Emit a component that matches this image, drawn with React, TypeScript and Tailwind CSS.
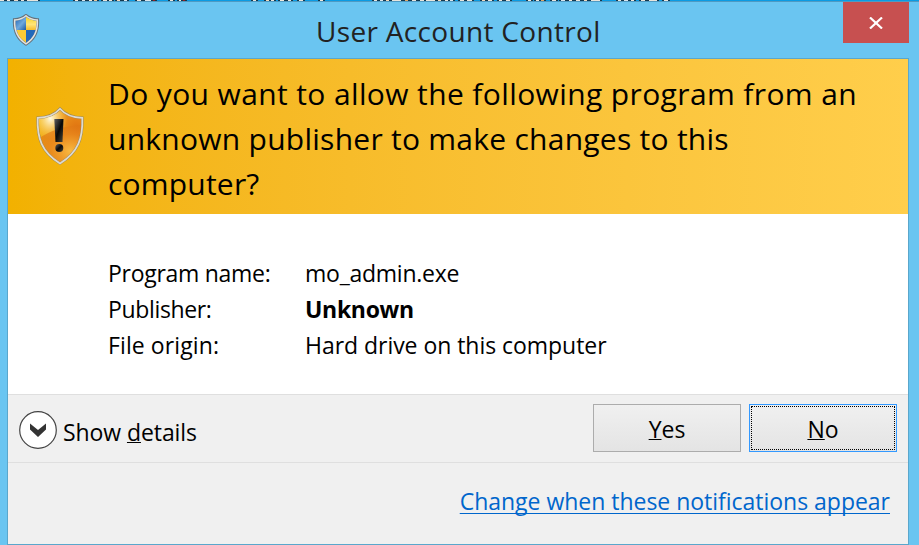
import React from "react";

const font = "font-['Open_Sans','Noto_Sans',sans-serif]";

// Pieces of the desktop label row peeking out above the window: left, width, colour
const slivers: [number, number, string][] = [
  [0, 4, "#e8e4dc"], [7, 3, "#f1ece4"], [14, 4, "#e8d8c8"], [21, 3, "#e8e4dc"], [27, 11, "#e8e4dc"],
  [75, 3, "#f0e8dc"], [82, 3, "#d8e4ec"], [89, 3, "#f0e8dc"], [94, 3, "#e8c89c"], [103, 4, "#e8e4dc"], [109, 3, "#e8e4dc"],
  [117, 3, "#f0d8bc"], [124, 3, "#d8e4ec"], [137, 4, "#e8e4dc"], [145, 7, "#d8e4ec"], [153, 2, "#932020"], [170, 3, "#e8e4dc"], [179, 4, "#f0e8dc"], [183, 2, "#932020"],
  [253, 3, "#e8e4dc"], [266, 3, "#f0d8bc"], [271, 3, "#e8e4dc"], [280, 4, "#f0e8dc"], [288, 3, "#e8e4dc"], [299, 4, "#e8e4dc"], [320, 3, "#f0e8dc"],
  [374, 3, "#e8e4dc"], [380, 3, "#d8e4ec"], [386, 3, "#f0d8bc"], [392, 9, "#e8e4dc"], [405, 3, "#e0a868"], [412, 4, "#e8e4dc"], [420, 4, "#e8e4dc"], [426, 9, "#e8e4dc"],
  [438, 3, "#f0d8bc"], [445, 3, "#e8e4dc"], [450, 3, "#d8e4ec"], [460, 4, "#e8e4dc"], [467, 5, "#e8e4dc"], [482, 3, "#f0d8bc"], [488, 4, "#e8e4dc"],
  [499, 3, "#e8e4dc"], [506, 4, "#e8e4dc"], [528, 3, "#f0e8dc"], [536, 3, "#e8e4dc"], [541, 3, "#e0a868"], [552, 4, "#e8e4dc"], [561, 4, "#d8e4ec"],
  [569, 3, "#f0e8dc"], [576, 4, "#e8e4dc"], [584, 3, "#f0d8bc"], [591, 9, "#e8e4dc"], [618, 3, "#e8e4dc"], [624, 4, "#d8e4ec"], [631, 3, "#f0e8dc"], [641, 4, "#e8e4dc"], [649, 8, "#e8e4dc"], [664, 4, "#e8e4dc"],
];

function UacShield() {
  return (
    <svg className="h-8 w-7" viewBox="0 0 28 32">
      <defs>
        <clipPath id="uac"><path d="M14 1.500C11 4 7 5.500 2 5.500c-.6 10 3 19 12 24.500 9-5.500 12.600-14.500 12-24.500-5 0-9-1.500-12-4z" /></clipPath>
        <linearGradient id="ub" x1="0" y1="0" x2="1" y2="1"><stop offset=".2" stopColor="#1c5fb0" /><stop offset=".65" stopColor="#6ea9de" /><stop offset="1" stopColor="#1c5aa5" /></linearGradient>
        <linearGradient id="uy" x1="0" y1="0" x2="0" y2="1"><stop offset=".2" stopColor="#f5d326" /><stop offset=".65" stopColor="#ffe578" /><stop offset="1" stopColor="#f5bd2c" /></linearGradient>
      </defs>
      <g clipPath="url(#uac)">
        <path fill="url(#ub)" d="M0 0h14v16H0z" />
        <path fill="url(#uy)" d="M14 0h14v16H14z" />
        <path fill="#fbcb35" d="M0 16h14v16H0z" />
        <path fill="#2268b9" d="M14 16h14v16H14z" />
      </g>
      <path fill="none" stroke="#65727c" strokeWidth="2.600" d="M14 1.300C11 4 7.500 5.300 2.200 5.500c-.6 10 2.300 19.200 11.800 24.800 9.500-5.600 12.400-14.800 11.800-24.800-5.300-.2-8.800-1.500-11.800-4.200z" />
      <path fill="none" stroke="#e3e3df" strokeWidth="1.500" d="M14 1.800C11 4.500 7.500 5.800 2.700 6c-.6 9.500 2.300 18.200 11.300 23.800 9-5.600 11.900-14.300 11.300-23.800-4.800-.2-8.300-1.500-11.300-4.200z" />
    </svg>
  );
}

function WarningShield() {
  return (
    <svg className="h-[58px] w-12" viewBox="0 0 48 58">
      <defs>
        <radialGradient id="wo" cx=".85" cy=".4" r=".8"><stop stopColor="#df7010" /><stop offset=".5" stopColor="#ec961c" /><stop offset="1" stopColor="#f3b51e" /></radialGradient>
        <radialGradient id="wh" cx=".3" cy=".2" r=".35"><stop stopColor="#fffbe6" /><stop offset="1" stopColor="#ffe268" stopOpacity="0" /></radialGradient>
        <radialGradient id="wl" cx=".7" cy=".65" r=".7"><stop stopColor="#f8b941" /><stop offset=".6" stopColor="#e8861c" stopOpacity=".85" /><stop offset="1" stopColor="#dd7412" stopOpacity=".6" /></radialGradient>
        <linearGradient id="wb" x1="0" y1="0" x2="1" y2="1"><stop stopColor="#606060" /><stop offset=".5" stopColor="#080808" /><stop offset="1" stopColor="#4b4639" /></linearGradient>
        <clipPath id="wc"><path d="M24 2C18 9 11 10.500 2 11c-.6 21 4 34 22 45 18-11 22.600-24 22-45-9-.5-16-2-22-9z" /></clipPath>
      </defs>
      <g clipPath="url(#wc)">
        <path fill="url(#wo)" d="M0 0h48v58H0z" />
        <path fill="url(#wh)" d="M0 0h48v58H0z" />
        <path fill="url(#wl)" d="M2 32Q20 19 48 18v40H2z" />
      </g>
      <path fill="none" stroke="#9b8659" strokeWidth="2.600" d="M24 1.700C18 8.700 11 10.500 1.700 10.800 1 31 5.500 45 24 56.500 42.500 45 47 31 46.300 10.800 37 10.500 30 8.700 24 1.700z" />
      <path fill="none" stroke="#dedacf" strokeWidth="1.700" d="M24 1.700C18 8.700 11 10.500 1.700 10.800 1 31 5.500 45 24 56.500 42.500 45 47 31 46.300 10.800 37 10.500 30 8.700 24 1.700z" />
      <path fill="url(#wb)" d="M18.300 12h9.200l-1 23h-7z" />
      <circle cx="23.300" cy="41" r="4" fill="url(#wb)" />
    </svg>
  );
}

export default function App() {
  return (
    <div className={`relative flex h-[545px] w-[919px] flex-col overflow-hidden bg-[#6ac5f1] text-black ${font}`}>
      <div className="relative h-px shrink-0 bg-[#0a9be4]">
        {slivers.map(([x, w, c]) => (
          <i key={x} className="absolute top-0 box-content h-px border-x-2 border-[#12384f]" style={{ left: x - 2, width: w, backgroundColor: c }} />
        ))}
      </div>
      <header className="flex h-[57px] shrink-0 items-start border-t border-[#4f9ac2] pl-3">
        <div className="mt-3"><UacShield /></div>
        <h1 className="ml-[276px] mt-2 w-[440px] whitespace-nowrap text-[28px] leading-[42px] tracking-[0.32px] text-[#222]">User Account Control</h1>
        <button className="ml-[87px] flex h-[41px] w-[66px] shrink-0 items-center justify-center bg-[#c75050]">
          <svg className="h-3 w-3.5" viewBox="0 0 14 12"><path d="M1 .5l12 11M13 .5l-12 11" stroke="white" strokeWidth="2.200" /></svg>
        </button>
      </header>
      <main className="ml-[7px] flex h-[487px] w-[902px] shrink-0 flex-col border border-[#5aa7cc] bg-[#f0f0f0]">
        <section className="flex h-[155px] shrink-0 bg-gradient-to-r from-[#f2b100] to-[#ffce4b] pl-7">
          <div className="mt-12"><WarningShield /></div>
          <h2 className="ml-6 mt-3 whitespace-nowrap text-[30px] leading-[45px]">
            <span className="block tracking-[0.38px]">Do you want to allow the following program from an</span>
            <span className="block tracking-[0.26px]">unknown publisher to make changes to this</span>
            <span className="block tracking-[0.2px]">computer?</span>
          </h2>
        </section>
        <section className="grid h-[180px] shrink-0 grid-cols-[197px_1fr] content-start bg-white pl-[100px] pt-[41px] text-[23px] leading-9">
          <span className="tracking-[-0.28px]">Program name:</span><span className="tracking-[-0.25px]">mo_admin.exe</span>
          <span className="tracking-[-0.35px]">Publisher:</span><b className="tracking-[-0.3px]">Unknown</b>
          <span className="tracking-[0.1px]">File origin:</span><span className="tracking-[-0.04px]">Hard drive on this computer</span>
        </section>
        <section className="flex h-[68px] shrink-0 border-t border-[#dfdfdf] pl-[11px] text-[23px]">
          <svg className="mt-4 h-[38px] w-[38px]" viewBox="0 0 38 38">
            <circle cx="19" cy="19" r="18.300" fill="white" stroke="#444" strokeWidth="1.200" />
            <path d="M11 12.500l8 6.500 8-6.500v6L19 26l-8-7.500z" fill="#333" />
          </svg>
          <span className="ml-1.5 mt-[19px] w-[530px] leading-9 tracking-[-0.08px]">Show <u className="decoration-1">d</u>etails</span>
          <button className="mt-[9px] h-12 w-[148px] border border-[#acacac] bg-gradient-to-b from-[#f0f0f0] to-[#e4e4e4] pt-0.5"><u className="decoration-1">Y</u>es</button>
          <button className="ml-2 mt-[9px] h-12 w-[148px] border border-[#3399ff] bg-gradient-to-b from-[#f0f0f0] to-[#e4e4e4] p-px"><span className="flex h-full items-center justify-center border border-dotted border-black pt-0.5"><span><u className="decoration-1">N</u>o</span></span></button>
        </section>
        <footer className="flex h-[82px] justify-end border-t border-[#dfdfdf] pr-[18px] pt-5 text-[23px] leading-9 text-[#0066cc]">
          <a className="whitespace-nowrap tracking-[-0.02px] underline decoration-1 underline-offset-[3px] [text-decoration-skip-ink:none]">Change when these notifications appear</a>
        </footer>
      </main>
    </div>
  );
}
